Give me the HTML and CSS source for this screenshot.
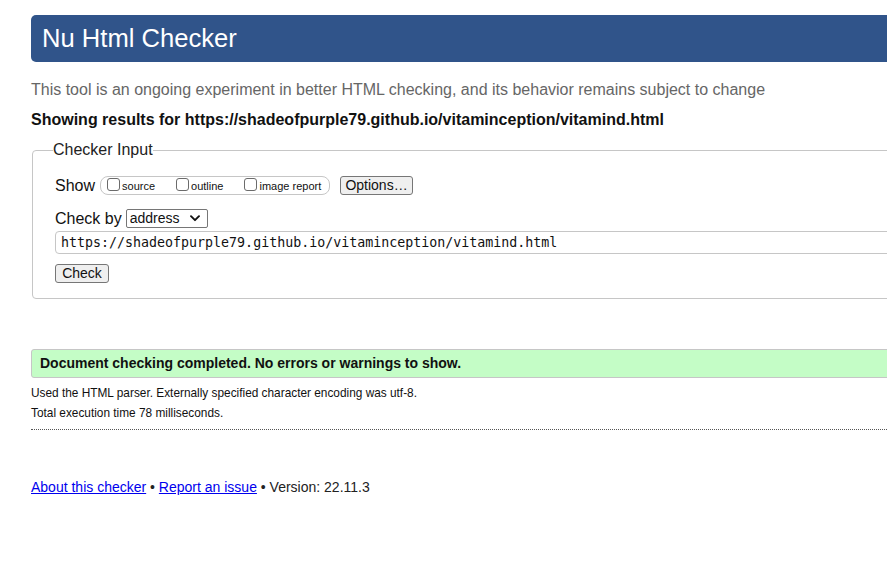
FILE: index.html
```html
<!DOCTYPE html>
<html lang="en">
<head>
<meta charset="utf-8">
<title>Nu Html Checker</title>
<link rel="stylesheet" href="styles.css">
</head>
<body>
<div class="page">
  <h1 class="title">Nu Html Checker</h1>
  <p class="tagline">This tool is an ongoing experiment in better HTML checking, and its behavior remains subject to change</p>
  <p class="showing">Showing results for https://shadeofpurple79.github.io/vitaminception/vitamind.html</p>
  <fieldset class="input-box">
    <legend class="legend">Checker Input</legend>
    <div class="row row-show">
      <span class="label">Show</span>
      <span class="pill">
        <label class="opt"><input type="checkbox" class="cb"><span>source</span></label>
        <label class="opt"><input type="checkbox" class="cb"><span>outline</span></label>
        <label class="opt"><input type="checkbox" class="cb"><span>image report</span></label>
      </span>
      <button class="btn btn-options" type="button">Options…</button>
    </div>
    <div class="row row-by">
      <span class="label">Check by</span>
      <span class="select-wrap">
        <select class="select"><option>address</option></select>
        <svg class="chev" width="10" height="7" viewBox="0 0 10 7"><path d="M1 1.2 L5 5.2 L9 1.2" fill="none" stroke="#111" stroke-width="1.9" stroke-linecap="round" stroke-linejoin="round"/></svg>
      </span>
    </div>
    <div class="row row-url">
      <input class="url" type="text" value="https://shadeofpurple79.github.io/vitaminception/vitamind.html">
    </div>
    <div class="row row-check">
      <button class="btn btn-check" type="button">Check</button>
    </div>
  </fieldset>
  <p class="success">Document checking completed. No errors or warnings to show.</p>
  <p class="details">Used the HTML parser. Externally specified character encoding was utf-8.</p>
  <p class="details details-time">Total execution time 78 milliseconds.</p>
  <hr class="dots">
  <p class="footer"><a href="#">About this checker</a> • <a href="#">Report an issue</a> • Version: 22.11.3</p>
</div>
</body>
</html>
```

FILE: styles.css
```css
html, body {
  margin: 0;
  padding: 0;
  overflow: hidden;
  background: #fff;
}
body {
  font-family: "Liberation Sans", Arial, sans-serif;
  color: #111;
}
.page {
  width: 1100px;
  padding-left: 31px;
}
.title {
  margin: 15px 0 0 0;
  height: 47px;
  line-height: 47px;
  padding-left: 11px;
  background: #30548a;
  color: #fff;
  font-weight: normal;
  font-size: 25.6px;
  border-radius: 5px;
}
.tagline {
  margin: 18px 0 0 0;
  font-size: 16px;
  line-height: 20px;
  color: #666;
}
.showing {
  margin: 10px 0 0 0;
  font-size: 16px;
  line-height: 20px;
  font-weight: bold;
  color: #111;
}
.input-box {
  margin: 11px 0 0 1px;
  padding: 0 22px 15px 22px;
  border: 1px solid #c6c6c6;
  border-radius: 4px;
  min-width: 0;
}
.legend {
  padding: 0;
  margin-left: -2px;
  font-size: 16px;
  line-height: 18px;
  color: #222;
}
.row {
  display: flex;
  align-items: center;
}
.label {
  font-size: 16px;
  line-height: 19px;
}
.row-show {
  margin-top: 17px;
  height: 19px;
}
.pill {
  display: flex;
  align-items: center;
  margin-left: 5px;
  height: 17px;
  width: 222px;
  border: 1px solid #c6c6c6;
  border-radius: 8px;
  padding-left: 6px;
  box-sizing: content-box;
}
.opt {
  display: flex;
  align-items: center;
  font-size: 11px;
  line-height: 13px;
  margin-right: 21px;
}
.opt:last-child {
  margin-right: 0;
}
.cb {
  appearance: none;
  -webkit-appearance: none;
  width: 13px;
  height: 13px;
  margin: -3px 2px 0 0;
  border: 1px solid #6b6b6b;
  border-radius: 3px;
  background: #fff;
  box-sizing: border-box;
}
.opt span {
  padding-top: 2px;
}
.btn {
  font-family: "Liberation Sans", Arial, sans-serif;
  background: #efefef;
  border: 1px solid #767676;
  border-radius: 3px;
  color: #111;
  padding: 0;
  height: 19px;
  font-size: 14px;
  line-height: 17px;
}
.btn-options {
  margin-left: 10px;
  width: 73px;
}
.row-by {
  margin-top: 13px;
  height: 20px;
}
.select-wrap {
  position: relative;
  margin-left: 4px;
  display: inline-block;
  height: 19px;
}
.select {
  appearance: none;
  -webkit-appearance: none;
  width: 82px;
  height: 19px;
  border: 1px solid #767676;
  border-radius: 2px;
  background: #fff;
  font-family: "Liberation Sans", Arial, sans-serif;
  font-size: 14px;
  color: #111;
  padding: 0 0 0 3px;
  margin: 0;
}
.chev {
  position: absolute;
  right: 8px;
  top: 6px;
  pointer-events: none;
}
.row-url {
  margin-top: 3px;
}
.url {
  width: 900px;
  height: 23px;
  box-sizing: border-box;
  border: 1px solid #c6c6c6;
  border-radius: 4px;
  padding: 0 5px;
  font-family: "DejaVu Sans Mono", "Liberation Mono", monospace;
  font-size: 13.3px;
  color: #111;
  margin: 0;
}
.row-check {
  margin-top: 10px;
}
.btn-check {
  width: 54px;
}
.success {
  margin: 50px 0 0 0;
  height: 27px;
  line-height: 27px;
  background: #c4fdc6;
  border: 1px solid #c6c6c6;
  border-radius: 3px;
  padding-left: 8px;
  font-size: 14px;
  font-weight: bold;
  color: #111;
}
.details {
  margin: 8px 0 0 0;
  font-size: 11.85px;
  line-height: 15px;
  color: #111;
}
.details-time {
  margin-top: 5px;
}
.dots {
  margin: 8px 0 0 0;
  border: 0;
  border-top: 1px dotted #555;
  height: 0;
}
.footer {
  margin: 48px 0 0 0;
  font-size: 14px;
  line-height: 18px;
  color: #222;
}
.footer a {
  color: #0000ee;
  text-decoration: underline;
}
```
